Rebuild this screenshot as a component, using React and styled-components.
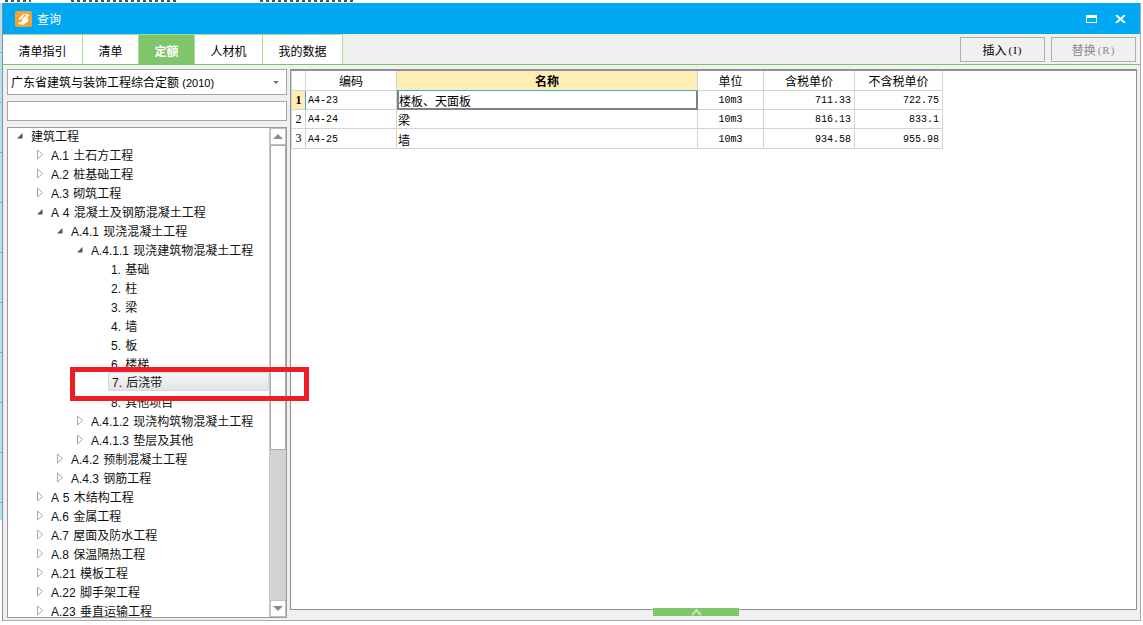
import React from 'react';
import styled, { createGlobalStyle } from 'styled-components';

const CJK = '"Liberation Sans", "Noto Sans CJK SC", sans-serif';
const MONO = '"Liberation Mono", "Noto Sans CJK SC", monospace';

const Global = createGlobalStyle`
  html, body { margin: 0; padding: 0; height: 625px; background: #fff; overflow: hidden; }
  #root { height: 625px; }
  * { box-sizing: border-box; }
`;

const Page = styled.div`
  width: 1143px; height: 625px; padding: 3px 2px 4px 3px;
  background: #fff; font-family: ${CJK}; color: #000;
`;
const Win = styled.div`
  width: 1138px; height: 618px; display: flex; flex-direction: column;
  background: #f0f0f0; border-bottom: 1px solid #aaa; border-right: 1px solid #aaa;
`;
const TitleBar = styled.div`
  height: 31px; flex: none; background: #00a8f3; display: flex; align-items: center;
  padding: 0 14px 0 12px; color: #fff;
`;
const Title = styled.span`font-size: 12px; margin-left: 5px; flex: 1;`;
const WinBtns = styled.div`display: flex; align-items: center; gap: 18px;`;
const TabRow = styled.div`
  height: 31px; flex: none; display: flex; justify-content: space-between;
  border-bottom: 1px solid #7cc65f; padding-right: 4px;
`;
const Tabs = styled.div`display: flex; height: 30px;`;
const Tab = styled.div`
  width: ${p => p.$w}px; height: 30px; display: flex; align-items: center; justify-content: center;
  font-size: 12px; padding-top: 2px; background: ${p => (p.$active ? '#7fc56a' : '#fff')};
  color: ${p => (p.$active ? '#fff' : '#000')}; font-weight: ${p => (p.$active ? 700 : 400)};
  border-top: 1px solid #a8dd93; border-right: 1px solid #a8dd93;
`;
const Actions = styled.div`display: flex; gap: 6px; padding-top: 3px;`;
const ActionBtn = styled.div`
  width: 85px; height: 25px; border: 1px solid #adadad; background: #f0f0f0;
  display: flex; align-items: center; justify-content: center; font-size: 12px;
  color: ${p => (p.$off ? '#8a8a8a' : '#000')};
`;
const Small = styled.span`
  font-size: 11px; font-family: "Liberation Serif", serif; letter-spacing: 1px; margin-left: 2px;
`;
const Body = styled.div`flex: 1; display: flex; padding: 4px 3px 0 4px; gap: 3px; min-height: 0;`;
const Left = styled.div`width: 280px; display: flex; flex-direction: column; flex: none;`;
const Combo = styled.div`
  height: 26px; background: #fff; border: 1px solid #a5a5ad; display: flex; align-items: center;
  padding: 0 6px 2px 3px; font-size: 12px; justify-content: space-between; flex: none;
`;
const Year = styled.span`font-size: 11px;`;
const Caret = styled.i`
  width: 0; height: 0; border-left: 3px solid transparent; border-right: 3px solid transparent;
  border-top: 3px solid #777; margin-right: 1px; margin-top: 2px;
`;
const SearchBox = styled.div`
  height: 20px; margin-top: 6px; background: #fff; border: 1px solid #a5a5ad; flex: none;
`;
const Tree = styled.div`
  margin-top: 6px; height: 491px; flex: none; display: flex; background: #fff;
  border: 1px solid #9a9aa6; overflow: hidden;
`;
const TreeList = styled.div`flex: 1; margin-top: -2px; overflow: hidden; min-width: 0;`;
const Row = styled.div`
  height: 19px; display: flex; align-items: center; font-size: 12px; white-space: nowrap; word-spacing: 1px;
  padding-left: ${p => p.$depth * 20 + 8}px; color: #111;
`;
const Arrow = styled.span`width: 15px; flex: none; display: flex; align-items: center;`;
const Scroll = styled.div`
  width: 17px; flex: none; display: flex; flex-direction: column; background: #d2d2d2;
  border-left: 1px solid #c8c8c8;
`;
const ScrollBtn = styled.div`
  height: 17px; flex: none; background: #fff; border: 1px solid #c0c0c0; display: flex;
  align-items: center; justify-content: center;
`;
const Thumb = styled.div`height: 305px; flex: none; background: #fff; border: 1px solid #aaa;`;
const ScrollGap = styled.div`flex: 1;`;
const Tri = styled.i`
  width: 0; height: 0; border-left: 5px solid transparent; border-right: 5px solid transparent;
  ${p => (p.$down ? 'border-top: 5px solid #8b8b8b;' : 'border-bottom: 5px solid #8b8b8b;')}
`;
const Right = styled.div`
  flex: 1; height: 541px; background: #fff; border: 1px solid #8e8e96; border-top-width: 2px; min-width: 0;
`;
const Grid = styled.div`
  display: grid; grid-template-columns: 14px 91px 301px 66px 91px 88px; width: max-content;
  border-bottom: 1px solid #d4d4d4; border-left: 1px solid #d4d4d4;
`;
const Head = styled.div`
  height: 20px; display: flex; align-items: center; justify-content: center; font-size: 12px;
  border-right: 1px solid #d4d4d4;
  background: ${p => (p.$hot ? '#feeeb5' : '#fff')}; font-weight: ${p => (p.$hot ? 700 : 400)};
  border-bottom: 1px solid ${p => (p.$hot ? '#3ca9dc' : '#d4d4d4')};
`;
const Cell = styled.div`
  height: 19px; display: flex; align-items: center; font-family: ${MONO}; font-size: 10px; padding: 1px 2px 0;
  border-right: 1px solid #d4d4d4; border-bottom: ${p => (p.$last ? 0 : 1)}px solid #d4d4d4;
  justify-content: ${p => (p.$align === 'right' ? 'flex-end' : p.$align === 'center' ? 'center' : 'flex-start')};
  ${p => p.$align === 'right' && 'padding-right: 3px;'}
`;
const NumCell = styled(Cell)`
  justify-content: center; font-size: 12px; font-family: "Liberation Serif", serif; padding: 0;
  background: ${p => (p.$on ? '#feeeb5' : '#fff')}; font-weight: ${p => (p.$on ? 700 : 400)};
  border-right: 1px solid ${p => (p.$on ? '#3ca9dc' : '#d4d4d4')};
`;
const NameCell = styled(Cell)`
  font-family: ${CJK}; font-size: 12px; padding-left: 1px;
  ${p => p.$sel && 'border: 2px solid #808080; border-top-width: 0; padding-left: 0;'}
`;
const FooterBar = styled.div`height: 12px; flex: none; padding: 0 0 4px 650px;`;
const Handle = styled.div`
  width: 86px; height: 8px; background: #7fc56a; display: flex; align-items: flex-start; justify-content: center;
`;
const HighlightRow = styled.div`
  height: 19px; margin-left: 100px; width: 161px; display: flex; align-items: center; font-size: 12px;
  padding: 0 0 1px 3px; border: 1px solid #d9d9d9; border-radius: 2px; color: #111; word-spacing: 1px;
  background: linear-gradient(#f6f6f6, #e4e4e4); transform: translateY(-1px);
`;
const Marker = styled.div`
  position: absolute; left: 70px; top: 367px; width: 239px; height: 34px;
  border: 5px solid #ee1c25; pointer-events: none;
`;
const LeftStrip = styled.div`
  position: absolute; left: 0; top: 3px; height: 618px; width: 3px; border-right: 1px solid #8f8f8f;
  background:
    linear-gradient(#fff, #fff) 0 517px / 100% 101px no-repeat,
    repeating-linear-gradient(#b4e2f5 0 49px, #9aa5aa 49px 50px);
`;
const TopStrip = styled.div`
  position: absolute; left: 0; top: 0; right: 0; height: 3px; display: flex; overflow: hidden;
`;
const TopFrag = styled.span`
  margin-left: ${p => p.$x}px; width: ${p => p.$w}px; height: 2px; flex: none;
  background: repeating-linear-gradient(90deg, #555 0 3px, #fff 3px 6px);
`;

const treeTop = [
  [0, 'open', '建筑工程'], [1, 'shut', 'A.1 土石方工程'], [1, 'shut', 'A.2 桩基础工程'], [1, 'shut', 'A.3 砌筑工程'],
  [1, 'open', 'A 4 混凝土及钢筋混凝土工程'], [2, 'open', 'A.4.1 现浇混凝土工程'], [3, 'open', 'A.4.1.1 现浇建筑物混凝土工程'],
  [4, '', '1. 基础'], [4, '', '2. 柱'], [4, '', '3. 梁'], [4, '', '4. 墙'], [4, '', '5. 板'], [4, '', '6. 楼梯'],
];
const treeBottom = [
  [4, '', '8. 其他项目'], [3, 'shut', 'A.4.1.2 现浇构筑物混凝土工程'], [3, 'shut', 'A.4.1.3 垫层及其他'],
  [2, 'shut', 'A.4.2 预制混凝土工程'], [2, 'shut', 'A.4.3 钢筋工程'], [1, 'shut', 'A 5 木结构工程'], [1, 'shut', 'A.6 金属工程'],
  [1, 'shut', 'A.7 屋面及防水工程'], [1, 'shut', 'A.8 保温隔热工程'], [1, 'shut', 'A.21 模板工程'], [1, 'shut', 'A.22 脚手架工程'],
  [1, 'shut', 'A.23 垂直运输工程'],
];
const rows = [
  ['1', 'A4-23', '楼板、天面板', '10m3', '711.33', '722.75'],
  ['2', 'A4-24', '梁', '10m3', '816.13', '833.1'],
  ['3', 'A4-25', '墙', '10m3', '934.58', '955.98'],
];

const TreeArrow = ({ kind }) => (
  <Arrow>
    {kind === 'open' && (
      <svg width="7" height="7" viewBox="0 0 7 7"><path d="M6.5 1 L6.5 6.5 L1 6.5 Z" fill="#555" /></svg>
    )}
    {kind === 'shut' && (
      <svg width="8" height="11" viewBox="0 0 8 11"><path d="M1.5 1 L6.5 5.5 L1.5 10 Z" fill="#fff" stroke="#a8a8a8" /></svg>
    )}
  </Arrow>
);

const TreeRow = ({ depth, kind, text }) => (
  <Row $depth={depth}>
    <TreeArrow kind={kind} />
    <span>{text}</span>
  </Row>
);

export default function App() {
  return (
    <Page>
      <Global />
      <TopStrip>
        <TopFrag $x={5} $w={26} />
        <TopFrag $x={40} $w={105} />
        <TopFrag $x={84} $w={95} />
      </TopStrip>
      <LeftStrip />
      <Win>
        <TitleBar>
          <svg width="17" height="16" viewBox="0 0 17 16">
            <rect width="17" height="16" rx="2" fill="#f7a12c" />
            <path d="M4 8.5 L9 3.5 M10 3 L13 4.5 L7 9 M3.5 12 L8 13 L13 9 M6 12 L13 7" fill="none" stroke="#fff" strokeWidth="1.8" />
          </svg>
          <Title>查询</Title>
          <WinBtns>
            <svg width="11" height="8" viewBox="0 0 11 8"><path d="M0 0H11V8H0Z M1 3V7H10V3Z" fill="#fff" fillRule="evenodd" /></svg>
            <svg width="11" height="8" viewBox="0 0 11 8"><path d="M1 0 L10 8 M10 0 L1 8" stroke="#fff" strokeWidth="2" /></svg>
          </WinBtns>
        </TitleBar>
        <TabRow>
          <Tabs>
            <Tab $w={80}>清单指引</Tab>
            <Tab $w={56}>清单</Tab>
            <Tab $w={56} $active>定额</Tab>
            <Tab $w={68}>人材机</Tab>
            <Tab $w={80}>我的数据</Tab>
          </Tabs>
          <Actions>
            <ActionBtn>插入<Small>(I)</Small></ActionBtn>
            <ActionBtn $off>替换<Small>(R)</Small></ActionBtn>
          </Actions>
        </TabRow>
        <Body>
          <Left>
            <Combo><span>广东省建筑与装饰工程综合定额 <Year>(2010)</Year></span><Caret /></Combo>
            <SearchBox />
            <Tree>
              <TreeList>
                {treeTop.map(([d, k, t]) => <TreeRow key={t} depth={d} kind={k} text={t} />)}
                <HighlightRow>7. 后浇带</HighlightRow>
                {treeBottom.map(([d, k, t]) => <TreeRow key={t} depth={d} kind={k} text={t} />)}
              </TreeList>
              <Scroll>
                <ScrollBtn><Tri /></ScrollBtn>
                <Thumb />
                <ScrollGap />
                <ScrollBtn><Tri $down /></ScrollBtn>
              </Scroll>
            </Tree>
          </Left>
          <Right>
            <Grid>
              <Head />
              <Head>编码</Head>
              <Head $hot>名称</Head>
              <Head>单位</Head>
              <Head>含税单价</Head>
              <Head>不含税单价</Head>
              {rows.map((r, i) => (
                <React.Fragment key={r[0]}>
                  <NumCell $on={i === 0} $last={i === 2}>{r[0]}</NumCell>
                  <Cell $last={i === 2}>{r[1]}</Cell>
                  <NameCell $sel={i === 0} $last={i === 2}>{r[2]}</NameCell>
                  <Cell $align="center" $last={i === 2}>{r[3]}</Cell>
                  <Cell $align="right" $last={i === 2}>{r[4]}</Cell>
                  <Cell $align="right" $last={i === 2}>{r[5]}</Cell>
                </React.Fragment>
              ))}
            </Grid>
          </Right>
        </Body>
        <FooterBar>
          <Handle>
            <svg width="11" height="8" viewBox="0 0 11 8"><path d="M1 7 L5.5 2 L10 7" fill="none" stroke="#c4e8b8" strokeWidth="2" /></svg>
          </Handle>
        </FooterBar>
      </Win>
      <Marker />
    </Page>
  );
}
